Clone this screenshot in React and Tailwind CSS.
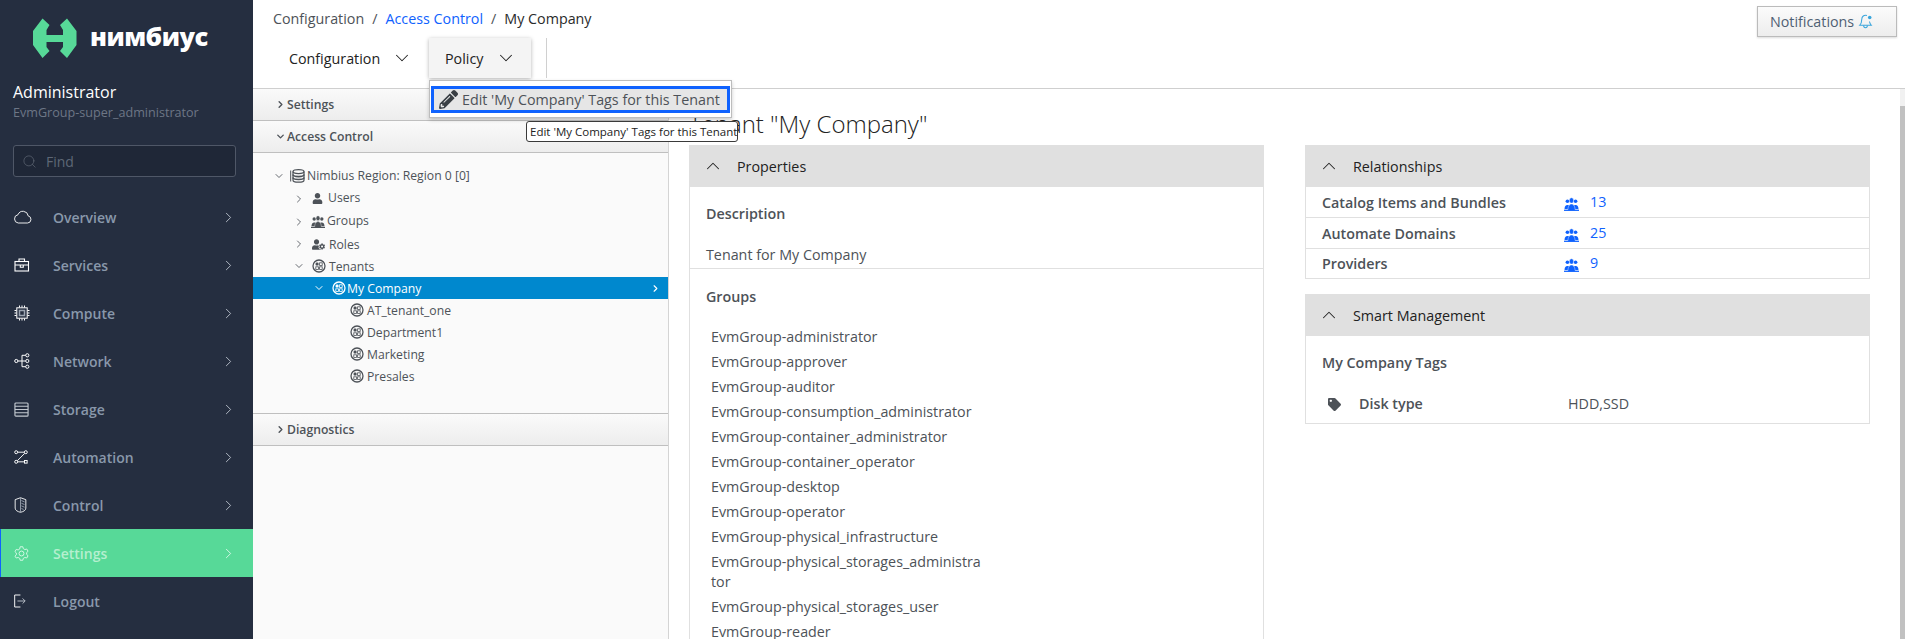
import React from "react";
import { ChevronRight, ChevronDown, ChevronUp, Search } from "lucide-react";
import { FaPencilAlt, FaTag, FaUser, FaUserCog } from "react-icons/fa";

const Cloud = () => (
  <svg viewBox="0 0 18 14" className="w-[18px] h-[14px]" fill="none" stroke="#ffffff" strokeWidth="0.9">
    <path d="M4.2 13h9.3a3.6 3.6 0 0 0 .7-7.1A5.3 5.3 0 0 0 4 4.7 4.2 4.2 0 0 0 4.2 13z" />
  </svg>
);
const Brief = () => (
  <svg viewBox="0 0 16 14" className="w-[16px] h-[14px]" fill="none" stroke="#ffffff" strokeWidth="1.1">
    <rect x="1" y="3.5" width="13.5" height="9.5" />
    <path d="M5 3.5V1h5.5v2.5M1 7h13.5M6.3 7v2.3h3V7" />
  </svg>
);
const Chip = () => (
  <svg viewBox="0 0 16 16" className="w-[16px] h-[16px]" fill="none" stroke="#ffffff" strokeWidth="1">
    <rect x="2.8" y="2.8" width="10.4" height="10.4" />
    <rect x="5.5" y="5.5" width="5" height="5" stroke="#9aa3b0" strokeWidth="1.5" />
    <path d="M5.5 0.5v2M8 .5v2M10.5.5v2M5.5 13.5v2M8 13.5v2M10.5 13.5v2M.5 5.5h2M.5 8h2M.5 10.5h2M13.5 5.5h2M13.5 8h2M13.5 10.5h2" />
  </svg>
);
const Net = () => (
  <svg viewBox="0 0 16 16" className="w-[16px] h-[16px]" fill="none" stroke="#ffffff" strokeWidth="1">
    <circle cx="2.3" cy="8" r="1.6" />
    <circle cx="13.3" cy="2.3" r="1.6" />
    <circle cx="13.3" cy="8" r="1.6" />
    <circle cx="13.3" cy="13.7" r="1.6" />
    <path d="M4 8h7.6M11.7 2.3H8v11.4h3.7" />
  </svg>
);
const Store = () => (
  <svg viewBox="0 0 16 16" className="w-[15px] h-[15px]" fill="none" stroke="#c4c9d0" strokeWidth="1.2">
    <rect x="1" y="1" width="14" height="14" rx="1" />
    <path d="M1 4.5h14M1 8h14M1 11.5h14" />
  </svg>
);
const Auto = () => (
  <svg viewBox="0 0 16 16" className="w-[14px] h-[14px]" fill="none" stroke="#ffffff" strokeWidth="1.1">
    <circle cx="2.5" cy="2.5" r="1.7" />
    <circle cx="2.5" cy="13.5" r="1.7" />
    <circle cx="13.5" cy="2.5" r="1.7" />
    <rect x="12" y="12" width="3" height="3" />
    <path d="M4.3 2.5h7.4M12.3 3.8L3.8 12.3M4.3 13.5h7.4" />
  </svg>
);
const Shield = () => (
  <svg viewBox="0 0 14 18" className="w-[13px] h-[16px]" fill="none" stroke="#ffffff" strokeWidth="1">
    <path d="M7 .8L13 3v9.5c0 2.7-3 4-6 4.7-3-.7-6-2-6-4.7V3z" />
    <path d="M7 .8V17M8 4l3.5 1.5M8 7l3.5 1.5M8 10l3.5 1.5M8 13l2.5 1" stroke="#9aa3b0" />
  </svg>
);
const Gear = () => (
  <svg viewBox="0 0 16 16" className="w-[15px] h-[15px]" fill="none" stroke="#d9f7e7" strokeWidth="1">
    <circle cx="8" cy="8" r="2.6" />
    <path d="M6.6.8h2.8l.5 2 1.7 1 2-.6 1.4 2.4-1.5 1.4v2l1.5 1.4-1.4 2.4-2-.6-1.7 1-.5 2H6.6l-.5-2-1.7-1-2 .6L1 10.8l1.5-1.4v-2L1 6l1.4-2.4 2 .6 1.7-1z" />
  </svg>
);
const Out = () => (
  <svg viewBox="0 0 14 16" className="w-[12px] h-[14px]" fill="none" stroke="#ffffff" strokeWidth="1.1">
    <path d="M7.5 1H.8v14h6.7" />
    <path d="M4 8h9M10 5l3 3-3 3" stroke="#b9bfc8" />
  </svg>
);
const Tenant = ({ c = "#4d5258" }) => (
  <svg viewBox="0 0 14 14" className="w-[14px] h-[14px]" fill="none">
    <circle cx="7" cy="7" r="6" stroke={c} strokeWidth="1.3" />
    <rect x="3.6" y="3.6" width="3" height="3" rx="1.2" fill={c} />
    <rect x="7.6" y="3.8" width="2.6" height="2.6" stroke={c} strokeWidth="0.8" />
    <rect x="3.8" y="7.8" width="2.6" height="2.6" stroke={c} strokeWidth="0.8" />
    <rect x="7.6" y="7.8" width="2.6" height="2.6" stroke={c} strokeWidth="0.8" />
  </svg>
);
const Crowd = ({ c = "#4d5258", w = 14 }) => (
  <svg viewBox="0 0 14 13" style={{ width: w, height: (w * 13) / 14 }} fill={c}>
    <circle cx="3.2" cy="4" r="1.7" />
    <circle cx="10.8" cy="4" r="1.7" />
    <path d="M0.5 11.2c0-2.4 1-3.8 2.7-3.8 1 0 1.6.4 2 1l-.9 2.8z" />
    <path d="M13.5 11.2c0-2.4-1-3.8-2.7-3.8-1 0-1.6.4-2 1l.9 2.8z" />
    <ellipse cx="7" cy="3.2" rx="2" ry="2.5" stroke="#ffffff" strokeWidth="0.4" />
    <path d="M3.6 12.6c0-3.7 1.3-6 3.4-6s3.4 2.3 3.4 6z" stroke="#ffffff" strokeWidth="0.4" />
    <path d="M0 11.8h14V13H0z" />
  </svg>
);
const Db = () => (
  <svg viewBox="0 0 15 14" className="w-[15px] h-[14px]" fill="none" stroke="#4d5258">
    <path d="M0.7 1.5v11" strokeWidth="1" />
    <ellipse cx="8.5" cy="2.6" rx="5.5" ry="2" strokeWidth="1.2" />
    <path d="M3 2.6v8.6c0 1.1 2.5 2 5.5 2s5.5-.9 5.5-2V2.6" strokeWidth="1.2" />
    <path d="M3 5.6c0 1.1 2.5 2 5.5 2s5.5-.9 5.5-2M3 8.5c0 1.1 2.5 2 5.5 2s5.5-.9 5.5-2" strokeWidth="1.6" />
  </svg>
);
const Bell = () => (
  <svg viewBox="0 0 16 16" className="w-[15px] h-[15px] ml-[4px]" fill="none" stroke="#39a5dc" strokeWidth="1.1">
    <path d="M9.5 1.6C6.5.7 4 2.6 4 5.8c0 3-.7 4.6-2.2 6.2h12.4c-1-1.1-1.7-2.3-2-4" />
    <path d="M6 12.2c0 1.4.9 2.4 2 2.4s2-1 2-2.4" />
    <circle cx="12.5" cy="3.8" r="1.9" fill="#39a5dc" stroke="none" />
  </svg>
);
const Logo = () => (
  <svg viewBox="0 0 60 52" className="w-[60px] h-[52px]" fill="#57d998">
    <path d="M14.5 6.5L21.5 13l-3 5v5H35v-5l-3-5 7-6.5L48.5 19v14L39 46l-7-7 3-4v-5H18.5v5l3 4-7 7L5 33V19z" />
  </svg>
);

const nav = [
  ["Overview", Cloud],
  ["Services", Brief],
  ["Compute", Chip],
  ["Network", Net],
  ["Storage", Store],
  ["Automation", Auto],
  ["Control", Shield],
  ["Settings", Gear],
  ["Logout", Out],
];

const groups = [
  "EvmGroup-administrator",
  "EvmGroup-approver",
  "EvmGroup-auditor",
  "EvmGroup-consumption_administrator",
  "EvmGroup-container_administrator",
  "EvmGroup-container_operator",
  "EvmGroup-desktop",
  "EvmGroup-operator",
  "EvmGroup-physical_infrastructure",
  "EvmGroup-physical_storages_administrator",
  "EvmGroup-physical_storages_user",
  "EvmGroup-reader",
];

function Sidebar() {
  return (
    <aside className="w-[253px] shrink-0 bg-[#252e40] flex flex-col">
      <div className="flex items-center h-[76px] pl-[28px]">
        <Logo />
        <span className="ml-[2px] mt-[-3px] text-[25.5px] leading-none font-extrabold text-white tracking-[-0.5px]">нимбиус</span>
      </div>
      <div className="pl-[13px] text-[16px] leading-[22px] text-white mt-[5px]">Administrator</div>
      <div className="pl-[13px] text-[12.6px] leading-[18px] text-[#6d7686] mt-[1px]">EvmGroup-super_administrator</div>
      <div className="ml-[13px] w-[223px] mt-[23px] h-[32px] rounded-[3px] border border-[#4f5767] bg-[#1f2737] flex items-center pl-[8px]">
        <Search size={15} strokeWidth={1} color="#666e7c" />
        <span className="ml-[9px] pt-[1px] text-[14px] text-[#5e6776]">Find</span>
      </div>
      <nav className="mt-[16px] flex flex-col">
        {nav.map(([label, Icon]) => {
          const active = label === "Settings";
          return (
            <div
              key={label}
              className={
                "h-[48px] flex items-center pr-[16px] pl-[13px] " +
                (active ? "bg-[#57d998] border-l border-[#0f62fe]" : "")
              }
            >
              <span className={"flex justify-start " + (active ? "w-[39px]" : "w-[40px] pl-[1px]")}>
                <Icon />
              </span>
              <span className={"flex-1 text-[14px] font-semibold " + (active ? "text-[#b5efcf]" : "text-[#8998ab]")}>
                {label}
              </span>
              {label !== "Logout" && (
                <ChevronRight size={17} strokeWidth={1.2} color={active ? "#e4fbef" : "#c5ccd6"} />
              )}
            </div>
          );
        })}
      </nav>
    </aside>
  );
}

function TopBar() {
  return (
    <header className="h-[89px] shrink-0 border-b border-[#cfcfcf] relative">
      <div className="flex items-center h-[37px] pl-[20px] text-[14.3px] text-[#4d5258]">
        <span>Configuration</span>
        <span className="mx-[8px]">/</span>
        <span className="text-[#0f62fe]">Access Control</span>
        <span className="mx-[8px]">/</span>
        <span className="text-[#2a2a2a]">My Company</span>
      </div>
      <div className="flex h-[40px] mt-[1px] text-[14.3px] text-[#222222]">
        <div className="flex items-center pl-[36px] w-[176px]">
          <span className="pt-[1px]">Configuration</span>
          <ChevronDown size={22} strokeWidth={1.1} className="ml-[11px]" />
        </div>
        <div className="flex items-center w-[102px] pl-[16px] bg-[#f4f4f4] shadow-[0_1px_4px_rgba(0,0,0,0.3)]">
          <span className="pt-[1px]">Policy</span>
          <ChevronDown size={22} strokeWidth={1.1} className="ml-[12px]" />
        </div>
        <div className="ml-[15px] w-px bg-[#d0d0d0]" />
      </div>
      <button className="absolute right-[8px] top-[6px] w-[140px] h-[31px] border border-[#bbbbbb] bg-gradient-to-b from-[#fbfbfb] to-[#ededed] shadow-[0_1px_2px_rgba(0,0,0,0.15)] flex items-center pl-[12px] text-[14.3px] text-[#4f5f73]">
        Notifications
        <Bell />
      </button>
    </header>
  );
}

function AccHead({ label, open, h = "h-[32px]" }) {
  return (
    <div
      className={
        h +
        " flex items-center border-b border-[#bfbfbf] bg-gradient-to-b from-[#fafafa] to-[#ededed] pl-[22px] text-[12.2px] font-semibold text-[#4d5258]"
      }
    >
      {open ? <ChevronDown size={11} strokeWidth={3} className="mr-[1px]" /> : <ChevronRight size={11} strokeWidth={3} className="mr-[1px]" />}
      <span className="pt-[1px]">{label}</span>
    </div>
  );
}

function Row({ pl, caret, icon, label, h = "h-[22px]", selected, gap = "ml-[4px]", caretMr = "mr-[7px]", textPt = "pt-[2px]" }) {
  return (
    <div
      className={
        h +
        " flex items-center text-[12.2px] " +
        (selected ? "bg-[#0088ce] text-white pr-[7px]" : "text-[#4d5258]")
      }
      style={{ paddingLeft: pl }}
    >
      {caret === "right" && <ChevronRight size={12} strokeWidth={1.7} className={caretMr} />}
      {caret === "down" && <ChevronDown size={12} strokeWidth={selected ? 2 : 1.7} className={caretMr} />}
      {icon}
      <span className={gap + " flex-1 " + textPt}>{label}</span>
      {selected && <ChevronRight size={11} strokeWidth={2.4} />}
    </div>
  );
}

function TreePanel() {
  return (
    <div className="w-[416px] shrink-0 bg-[#fafafa] border-r border-[#d4d4d4] flex flex-col">
      <AccHead label="Settings" />
      <AccHead label="Access Control" open />
      <div className="h-[261px] pt-[12px] border-b border-[#bfbfbf]">
        <Row pl={20} caret="down" caretMr="mr-[5px]" gap="ml-[2px]" textPt="pt-[1px]" icon={<Db />} label="Nimbius Region: Region 0 [0]" />
        <Row pl={40} caret="right" h="h-[23px]" textPt="pt-0" icon={<FaUser size={11} color="#4d5258" />} label="Users" gap="ml-[5px]" />
        <Row pl={40} caret="right" h="h-[23px]" textPt="pt-0" icon={<Crowd />} label="Groups" gap="ml-[2px]" caretMr="mr-[6px]" />
        <Row pl={40} caret="right" icon={<FaUserCog size={13} color="#4d5258" />} label="Roles" />
        <Row pl={40} caret="down" icon={<Tenant />} label="Tenants" gap="ml-[3px]" />
        <Row pl={60} caret="down" selected icon={<Tenant c="#ffffff" />} label="My Company" gap="ml-[1px]" />
        <Row pl={97} icon={<Tenant />} label="AT_tenant_one" gap="ml-[3px]" />
        <Row pl={97} icon={<Tenant />} label="Department1" gap="ml-[3px]" />
        <Row pl={97} icon={<Tenant />} label="Marketing" gap="ml-[3px]" />
        <Row pl={97} icon={<Tenant />} label="Presales" gap="ml-[3px]" />
      </div>
      <AccHead label="Diagnostics" />
    </div>
  );
}

function PanelHead({ label }) {
  return (
    <div className="h-[42px] bg-[#e0e0e0] flex items-center pl-[13px] text-[14.3px] text-[#222222]">
      <ChevronUp size={22} strokeWidth={1.1} />
      <span className="ml-[13px] pt-[2px]">{label}</span>
    </div>
  );
}

function Content() {
  return (
    <div className="flex-1 min-w-0 pl-[20px] overflow-hidden">
      <h1 className="h-[56px] pt-[17px] text-[24px] leading-[36px] font-light text-[#222222]">Tenant "My Company"</h1>
      <div className="flex gap-[41px] items-start">
        <section className="w-[575px] shrink-0">
          <PanelHead label="Properties" />
          <div className="border-x border-[#e0e0e0] text-[14.3px] text-[#4d5258]">
            <div className="h-[82px] border-b border-[#e0e0e0] pl-[16px]">
              <div className="pt-[17px] leading-[20px] font-semibold">Description</div>
              <div className="mt-[21px] leading-[20px]">Tenant for My Company</div>
            </div>
            <div className="pl-[16px]">
              <div className="pt-[18px] leading-[20px] font-semibold">Groups</div>
              <ul className="mt-[20px] pl-[5px] w-[278px] break-all">
                {groups.map((g) => (
                  <li key={g} className="leading-[20px] pb-[5px]">
                    {g}
                  </li>
                ))}
              </ul>
            </div>
          </div>
        </section>
        <section className="w-[565px] shrink-0">
          <PanelHead label="Relationships" />
          <div className="border-x border-b border-[#e0e0e0] text-[14.3px] text-[#4d5258]">
            {[
              ["Catalog Items and Bundles", "13", "h-[31px] pt-[1px] border-b border-[#e0e0e0]"],
              ["Automate Domains", "25", "h-[31px] pt-[1px] border-b border-[#e0e0e0]"],
              ["Providers", "9", "h-[29px]"],
            ].map(([l, v, cls]) => (
              <div key={l} className={"flex items-center pl-[16px] " + cls}>
                <span className="w-[242px] font-semibold">{l}</span>
                <span className="mt-[3px]">
                  <Crowd c="#0f62fe" w={15} />
                </span>
                <span className="ml-[11px] text-[#0f62fe] mt-[-2px]">{v}</span>
              </div>
            ))}
          </div>
          <div className="mt-[15px]">
            <PanelHead label="Smart Management" />
            <div className="h-[88px] border-x border-b border-[#e0e0e0] text-[14.3px] text-[#4d5258]">
              <div className="pl-[16px] pt-[17px] leading-[20px] font-semibold">My Company Tags</div>
              <div className="flex items-center mt-[21px] leading-[20px] pl-[22px]">
                <FaTag size={13} color="#4d5258" />
                <span className="ml-[18px] w-[209px] font-semibold">Disk type</span>
                <span>HDD,SSD</span>
              </div>
            </div>
          </div>
        </section>
      </div>
    </div>
  );
}

function Scrollbar() {
  return (
    <div className="w-[5px] shrink-0 bg-[#f1f1f1] flex flex-col">
      <div className="h-[17px]" />
      <div className="flex-1 bg-[#c1c1c1]" />
    </div>
  );
}

export default function App() {
  return (
    <div className="relative h-[639px] w-[1905px] overflow-hidden flex bg-white font-['Open_Sans',sans-serif]">
      <Sidebar />
      <main className="flex-1 min-w-0 flex flex-col">
        <TopBar />
        <div className="flex flex-1 min-h-0">
          <TreePanel />
          <Content />
          <Scrollbar />
        </div>
      </main>
      <div className="absolute left-[429px] top-[80px] w-[303px] h-[38px] bg-white border border-[#bdbdbd] shadow-[0_2px_4px_rgba(0,0,0,0.2)] pt-[5px] px-[1px]">
        <div className="h-[27px] border-[3px] border-[#0f62fe] bg-[#e6e6e6] flex items-center pl-[5px] text-[14.3px] text-[#4d5258]">
          <FaPencilAlt size={19} color="#3a3f44" />
          <span className="ml-[4px] whitespace-nowrap">Edit 'My Company' Tags for this Tenant</span>
        </div>
      </div>
      <div className="absolute left-[526px] top-[121px] h-[21px] w-[212px] rounded-[3px] border border-[#3a3a3a] bg-white flex items-center pl-[3px] text-[11.5px] text-[#222222] whitespace-nowrap">
        Edit 'My Company' Tags for this Tenant
      </div>
    </div>
  );
}
